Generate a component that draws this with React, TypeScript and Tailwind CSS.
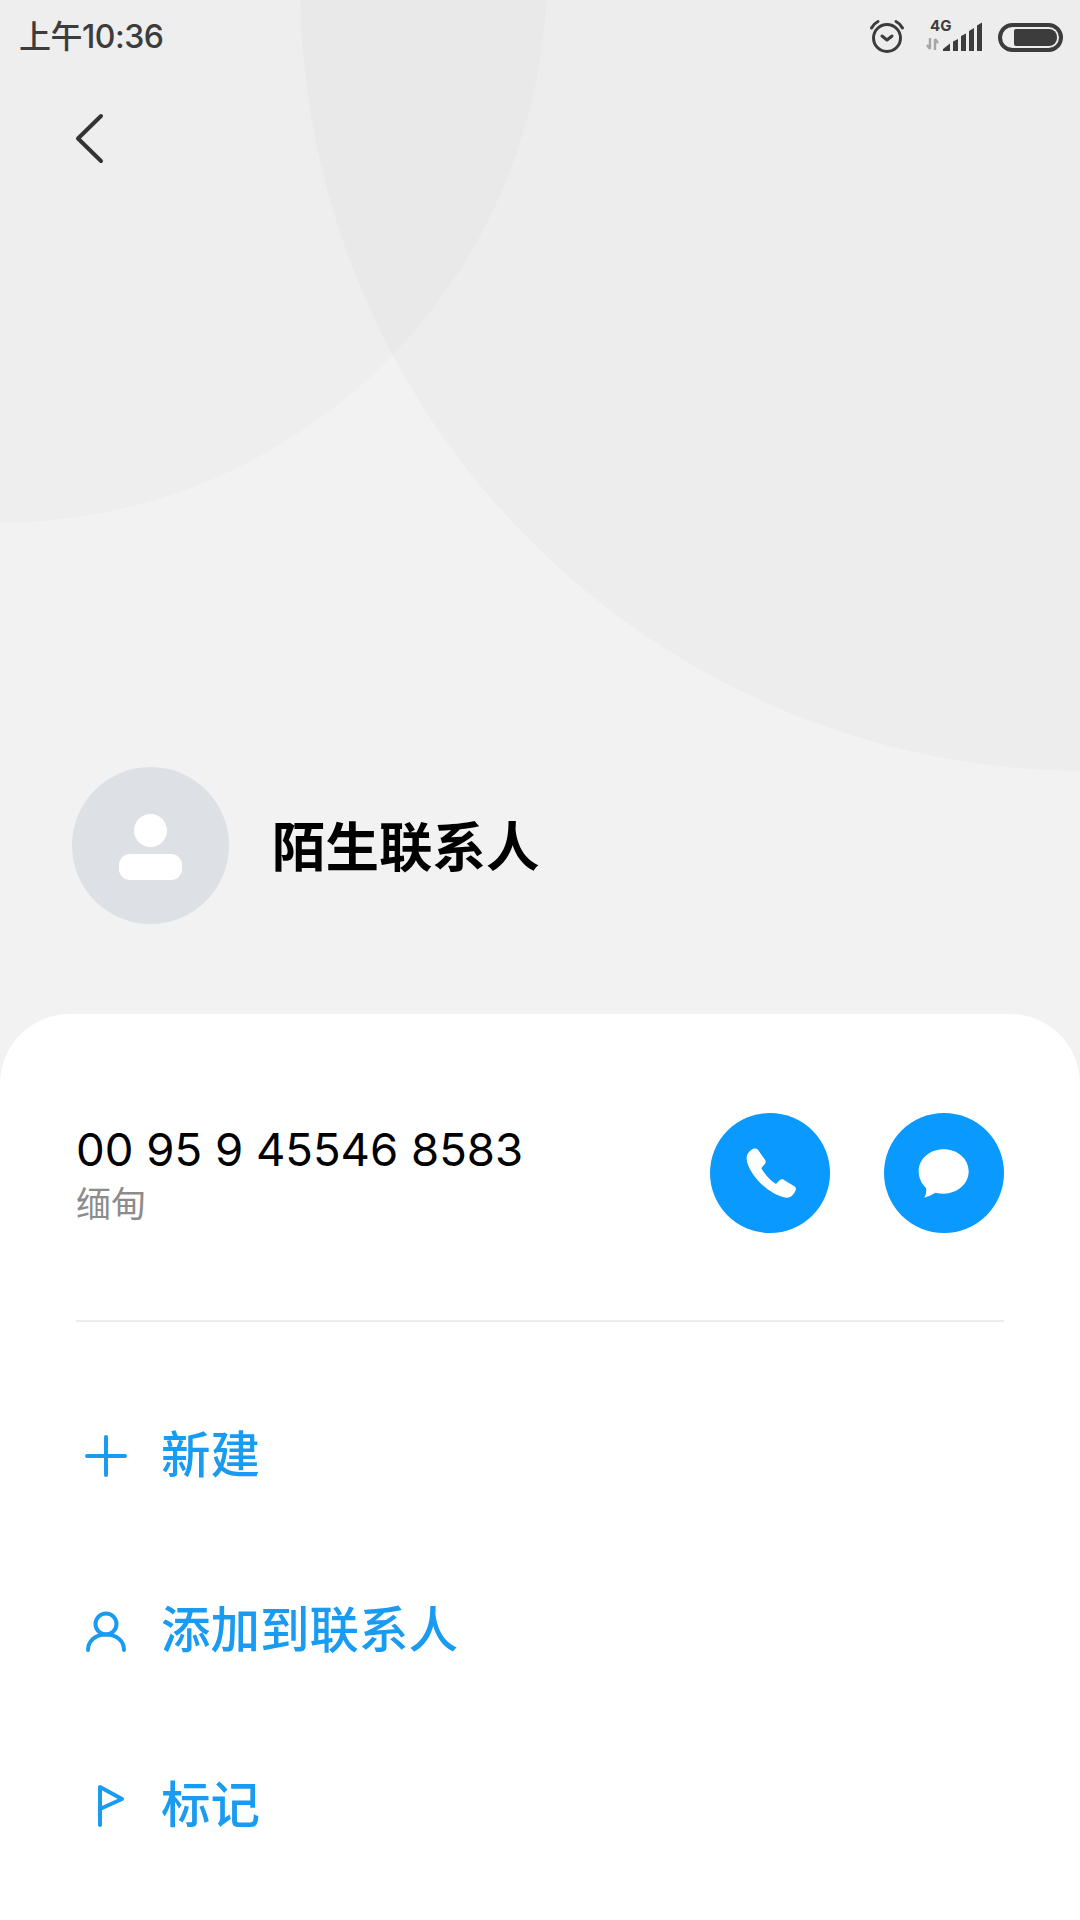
const cjk = "font-['Inter','Noto_Sans_CJK_SC',sans-serif]";

function Alarm() {
  return (
    <svg width="36" height="36" viewBox="0 0 36 36" fill="none" stroke="#3c3c3c" strokeLinecap="round" strokeLinejoin="round">
      <circle cx="18" cy="19" r="13.5" strokeWidth="3" />
      <path d="M13 17l5 4 5-4" strokeWidth="3" />
      <path d="M2.5 9c1.500-3 3.500-5 6.500-6.500M33.500 9c-1.500-3-3.500-5-6.500-6.500" strokeWidth="3" />
    </svg>
  );
}

function Signal() {
  return (
    <svg width="60" height="36" viewBox="0 0 60 36" fill="none">
      <path d="M5 19v11M5 30l-3-4M10 31V20M10 20l3 4" stroke="#a6a6a6" strokeWidth="2.400" />
      <path d="M18 30l7-5.500V32h-7zM28 22.500l5-2.500V32h-5zM36 17l5-2.500V32h-5zM44 12l5-3V32h-5zM52 6.500l5-3V32h-5z" fill="#3c3c3c" />
    </svg>
  );
}

function Battery() {
  return (
    <div className="flex h-[29px] w-[65px] items-center justify-end rounded-[15px] border-4 border-[#3c3c3c] pr-[2px]">
      <div className="h-[17px] w-[43px] rounded-l-[2px] rounded-r-[8px] bg-[#3c3c3c]" />
    </div>
  );
}

function StatusBar() {
  return (
    <div className="relative flex h-[74px] items-center justify-between pl-[19px] pr-[17px]">
      <span className={`${cjk} text-[32px] leading-none font-medium tracking-[-0.5px] text-[#3c3c3c]`}>上午10:36</span>
      <div className="flex items-center">
        <div className="-mr-[1px]">
          <Alarm />
        </div>
        <div className="relative ml-[21px] h-[36px] w-[60px]">
          <Signal />
          <span className="absolute left-[5px] top-[-1px] font-['Inter',sans-serif] text-[15px] leading-[16px] font-bold text-[#3c3c3c]">4G</span>
        </div>
        <div className="ml-[13px]">
          <Battery />
        </div>
      </div>
    </div>
  );
}

function Avatar() {
  return (
    <div className="flex h-[157px] w-[157px] shrink-0 flex-col items-center justify-center gap-[7px] rounded-full bg-[#dde0e5] pt-[2px]">
      <div className="h-[33px] w-[33px] rounded-full bg-white" />
      <div className="h-[26px] w-[63px] rounded-[11px] bg-white" />
    </div>
  );
}

function CircleButton({ children }: { children: React.ReactNode }) {
  return (
    <button className="flex h-[120px] w-[120px] items-center justify-center rounded-full bg-[#0a99ff]">
      {children}
    </button>
  );
}

function ActionRow({ icon, label }: { icon: React.ReactNode; label: string }) {
  return (
    <div className="flex h-[175px] items-center">
      <div className="flex w-[86px] shrink-0 pl-[9px]">{icon}</div>
      <span className={`${cjk} text-[49.5px] leading-none font-medium text-[#1a9bf2]`}>{label}</span>
    </div>
  );
}

export default function App() {
  return (
    <div className="relative flex h-[1920px] w-[1080px] flex-col overflow-hidden bg-[#f2f2f2]">
      {/* background circles */}
      <div className="absolute left-[-553px] top-[-577px] h-[1100px] w-[1100px] rounded-full bg-[#eeeeee]" />
      <div className="absolute left-[300px] top-[-801px] h-[1572px] w-[1572px] rounded-full bg-black/[0.02]" />

      <StatusBar />

      <div className="relative flex h-[90px] items-center pl-[72px] pt-[40px]">
        <svg width="36" height="56" viewBox="0 0 36 56" fill="none" stroke="#333333" strokeWidth="4" strokeLinecap="round" strokeLinejoin="round">
          <path d="M29 5L6 27.500 29 50" />
        </svg>
      </div>

      <div className="relative mt-[603px] flex items-center pl-[72px]">
        <Avatar />
        <span className={`${cjk} ml-[43px] pt-[4px] text-[53.5px] leading-none font-bold text-black`}>陌生联系人</span>
      </div>

      <div className="relative mt-[90px] flex-1 rounded-t-[70px] bg-white px-[76px]">
        <div className="flex h-[308px] items-start border-b-2 border-[#ececec] pt-[99px]">
          <div className="flex-1 pt-[12px]">
            <div className="font-['Inter',sans-serif] text-[45.5px] leading-[50px] text-black">00 95 9 45546 8583</div>
            <div className={`${cjk} mt-[9px] text-[35px] leading-[40px] text-[#8c8c8c]`}>缅甸</div>
          </div>
          <div className="flex gap-[54px]">
            <CircleButton>
              <svg width="120" height="120" viewBox="60 68 360 360" fill="white">
                <path d="M183 180C190 172 200 173 205 180L226 210C228 215 227 219 224 222L214 233C222 250 240 270 258 281L269 270C272 267 276 266 281 268L313 288C319 292 319 298 315 304C310 313 302 322 290 322C262 320 225 295 202 268C182 245 168 218 170 200C171 192 176 185 183 180Z" />
              </svg>
            </CircleButton>
            <CircleButton>
              <svg width="120" height="120" viewBox="582 68 360 360" fill="white">
                <path d="M761 177C803 177 836 206 836 243C836 280 803 310 761 310C752 310 744 309 736 307C726 313 714 319 702 322C708 315 710 305 708 293C695 281 686 263 686 243C686 206 719 177 761 177Z" />
              </svg>
            </CircleButton>
          </div>
        </div>

        <div className="-ml-[1px] mt-[46px]">
          <ActionRow
            label="新建"
            icon={
              <svg width="44" height="44" viewBox="0 0 44 44" fill="none" stroke="#1a9bf2" strokeWidth="4" strokeLinecap="round">
                <path d="M22 3v38M3 22h38" />
              </svg>
            }
          />
          <ActionRow
            label="添加到联系人"
            icon={
              <svg width="44" height="44" viewBox="0 0 44 44" fill="none" stroke="#1a9bf2" strokeWidth="4" strokeLinecap="round">
                <circle cx="22" cy="15" r="10.500" />
                <path d="M4 41c0-8.500 7-15.500 18-15.500S40 32.500 40 41" />
              </svg>
            }
          />
          <ActionRow
            label="标记"
            icon={
              <svg width="44" height="44" viewBox="0 0 44 44" fill="none" stroke="#1a9bf2" strokeWidth="4" strokeLinecap="round" strokeLinejoin="round">
                <path d="M16 41V3l22 12-22 10" />
              </svg>
            }
          />
        </div>
      </div>
    </div>
  );
}
